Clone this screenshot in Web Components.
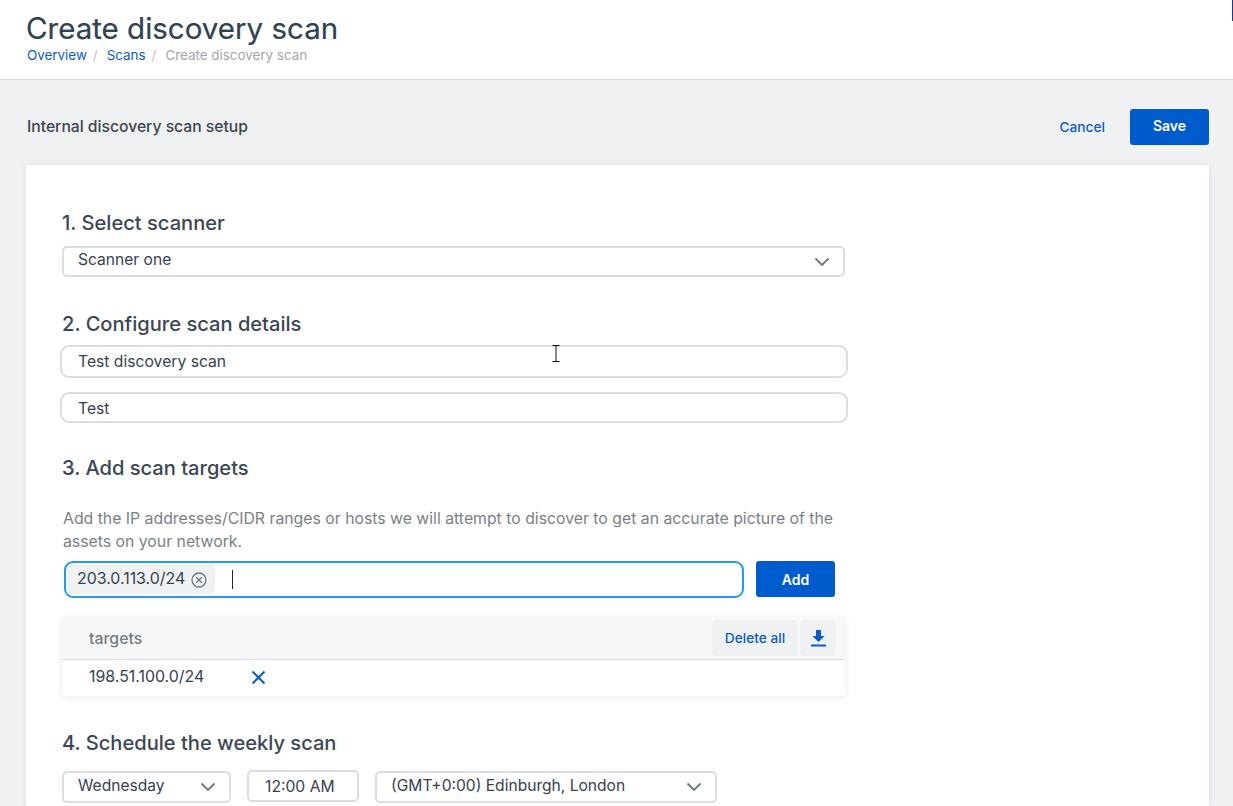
<!DOCTYPE html>
<html lang="en"><head><meta charset="utf-8"><title>Create discovery scan</title>
<style>
html,body{margin:0;height:806px;overflow:hidden}
body{background:#f0f1f3;font-family:Inter,"Liberation Sans",sans-serif;color:#36424f;position:relative}
</style></head><body>
<scan-app></scan-app>
<script>
const el=(name,html,fn)=>customElements.define(name,class extends HTMLElement{
  constructor(){super();this.attachShadow({mode:'open'}).innerHTML=html;}
  connectedCallback(){fn&&fn(this)}
});
const chev='<svg width="16" height="10" viewBox="0 0 16 10" fill="none" stroke="#6f7680" stroke-width="1.800"><path d="M1.500 1.500 8 8l6.500-6.500"/></svg>';

el('page-header',`<style>
:host{display:block;background:#fff;height:79px;border-bottom:1px solid #dcdde0;box-sizing:content-box;padding-left:26px;position:relative}
h1{margin:0;padding-top:10px;font-size:29.500px;line-height:36px;font-weight:400;color:#2f4252;-webkit-text-stroke:.2px #2f4252}
nav{display:flex;font-size:13.400px;line-height:18px;margin:0 0 0 1px}
a{color:#0b5cc7}span{color:#bdc0c5;margin:0 9px 0 6px}b{font-weight:400;color:#a3a7ad}
i{position:absolute;right:0;top:0;width:1px;height:21px;background:#0a3fa8}
</style><h1>Create discovery scan</h1><nav><a>Overview</a><span>/</span><a>Scans</a><span>/</span><b>Create discovery scan</b></nav><i></i>`);

el('action-bar',`<style>
:host{display:flex;align-items:center;height:85px;padding:0 24px 0 27px}
.t{font-size:15.700px;font-weight:500;color:#3b4550;flex:1;margin-top:8px}
.c{font-size:13.700px;font-weight:500;color:#0b5cc7;margin:8px 25px 0 0}
</style><div class="t">Internal discovery scan setup</div><div class="c">Cancel</div><ui-button style="margin-top:8px" w="79" up="2">Save</ui-button>`);

el('ui-button',`<style>
:host{display:inline-flex;align-items:center;justify-content:center;height:36px;background:#005ccc;color:#fff;border-radius:3px;font-size:14px;font-weight:600;font-family:Inter,sans-serif}
</style><div class="s"><slot></slot></div>`,h=>{h.style.width=h.getAttribute('w')+'px';h.shadowRoot.querySelector('.s').style.marginTop='-'+(h.getAttribute('up')||0)+'px'});

el('section-title',`<style>
:host{display:block;font-size:20.100px;line-height:26px;font-weight:500;color:#3b4754}
</style><slot></slot>`);

el('ui-select',`<style>
:host{display:flex;align-items:center;box-sizing:border-box;height:31px;border:2px solid #dcdde3;border-radius:5px;background:#fff;font-size:15.600px;color:#36424f;padding:0 13px 0 14px}
.v{flex:1;margin-top:-4px;white-space:nowrap}svg{display:block}
</style><div class="v"><slot></slot></div>${chev}`);

el('ui-input',`<style>
:host{display:flex;align-items:center;box-sizing:border-box;border:2.500px solid #dcdde3;border-radius:9px;background:#fff;font-size:15.700px;color:#36424f;padding:0 0 0 16px;white-space:nowrap}
</style><slot></slot>`);

el('chip-input',`<style>
:host{display:flex;align-items:center;box-sizing:border-box;width:680px;height:37px;border:2px solid #1f9bf0;border-radius:9px;background:#fff;padding-left:1px}
.chip{display:flex;align-items:center;height:29px;width:148px;box-sizing:border-box;background:#f0f1f3;border-radius:3px;padding-left:10px;font-size:15.900px;color:#36424f;gap:6px}
.t{margin-top:-2px}
.caret{width:1px;height:19px;background:#222;margin-left:17px}
svg{display:block}
</style><div class="chip"><span class="t">203.0.113.0/24</span><svg width="16" height="16" viewBox="0 0 16 16" fill="none" stroke="#6f7680" stroke-width="1.300"><circle cx="8" cy="8" r="7"/><path d="M5.200 5.200l5.600 5.600M10.800 5.200l-5.600 5.600"/></svg></div><div class="caret"></div>`);

el('target-table',`<style>
:host{display:block;width:783px;background:#fff;box-shadow:0 1px 6px rgba(30,40,60,.10)}
.h{display:flex;align-items:center;height:43px;box-sizing:border-box;background:#f7f8f9;border-bottom:1px solid #d9dbe0;padding:0 9px 0 27px}
.n{flex:1;font-size:15.900px;font-weight:500;color:#767c84}
.b{display:flex;align-items:center;justify-content:center;height:36px;background:#f0f1f3;border-radius:4px;color:#0b5cc7;font-size:13.700px;font-weight:500}
.r{display:flex;align-items:center;height:36px;box-sizing:border-box;padding:0 0 2px 27px;font-size:15.900px;color:#36424f}
.ip{width:162px;margin-top:-2px}svg{display:block}
</style><div class="h"><div class="n">targets</div><div class="b" style="width:86px;margin-right:2px">Delete all</div><div class="b" style="width:36px"><svg width="15" height="18" viewBox="0 0 15 18" fill="#0b5cc7"><path d="M5 1h5v6h3.500L7.500 13 1.500 7H5z"/><rect y="15.500" width="15" height="2"/></svg></div></div>
<div class="r"><div class="ip">198.51.100.0/24</div><svg width="15" height="15" viewBox="0 0 15 15" fill="none" stroke="#0b5cc7" stroke-width="2"><path d="M1.500 1.500l12 12M13.500 1.500l-12 12"/></svg></div>`);

el('scan-card',`<style>
:host{display:block;margin:0 24px 0 26px;height:641px;background:#fff;box-shadow:0 1px 6px rgba(30,40,60,.10);padding:45px 0 0 36px;box-sizing:border-box;position:relative}
.beam{position:absolute;left:526px;top:180px}
p{margin:0 0 0 1px;font-size:15.800px;line-height:23px;color:#7b8087;width:785px}
.row{display:flex;align-items:flex-start}
</style>
<section-title>1. Select scanner</section-title>
<ui-select style="margin-top:10px;width:783px">Scanner one</ui-select>
<section-title style="margin-top:34px">2. Configure scan details</section-title>
<ui-input style="width:788px;height:33px;margin:8px 0 0 -2px">Test discovery scan</ui-input>
<ui-input style="width:788px;height:31px;margin:14px 0 0 -2px"><span style="margin-top:1px">Test</span></ui-input>
<section-title style="margin-top:32px">3. Add scan targets</section-title>
<p style="margin-top:26px">Add the IP addresses/CIDR ranges or hosts we will attempt to discover to get an accurate picture of the assets on your network.</p>
<div class="row" style="margin-top:8px"><chip-input style="margin-left:2px"></chip-input><ui-button w="79" style="margin-left:12px">Add</ui-button></div>
<target-table style="margin-top:19px"></target-table>
<section-title style="margin-top:34px">4. Schedule the weekly scan</section-title>
<div class="row" style="margin-top:14px">
<ui-select style="width:169px;height:32px;margin-top:1px">Wednesday</ui-select>
<ui-input style="width:112px;height:32px;margin-left:16px;border-width:2px;border-radius:5px">12:00 AM</ui-input>
<ui-select style="width:342px;height:32px;margin:1px 0 0 16px">(GMT+0:00) Edinburgh, London</ui-select>
</div>
<svg class="beam" width="8" height="17" viewBox="0 0 8 17" fill="none" stroke="#111" stroke-width="1"><path d="M.5 .5h7M4 .5v16M.5 16.500h7"/></svg>`);

el('scan-app',`<style>:host{display:block}</style><page-header></page-header><action-bar></action-bar><scan-card></scan-card>`);
</script>
</body></html>
